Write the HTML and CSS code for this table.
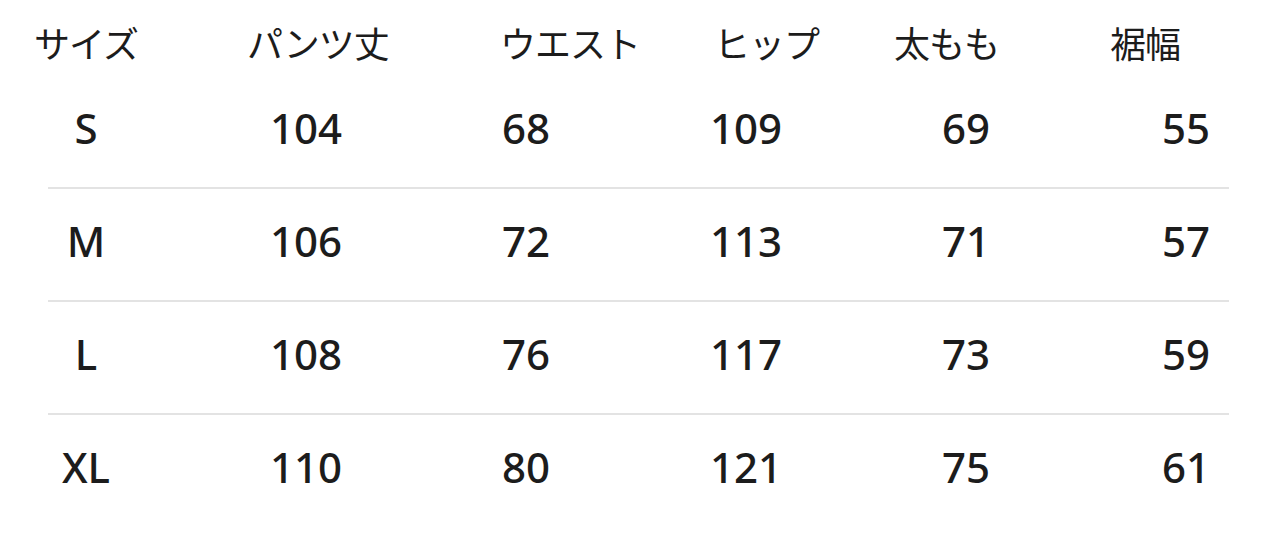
FILE: index.html
```html
<!DOCTYPE html>
<html lang="ja">
<head>
<meta charset="utf-8">
<title>サイズ表</title>
<link rel="stylesheet" href="styles.css">
</head>
<body>
<div class="chart">
  <div class="head">
    <div class="h">サイズ</div>
    <div class="h">パンツ丈</div>
    <div class="h">ウエスト</div>
    <div class="h">ヒップ</div>
    <div class="h">太もも</div>
    <div class="h">裾幅</div>
  </div>
  <div class="row">
    <div class="c">S</div><div class="c">104</div><div class="c">68</div><div class="c">109</div><div class="c">69</div><div class="c">55</div>
  </div>
  <div class="row">
    <div class="c">M</div><div class="c">106</div><div class="c">72</div><div class="c">113</div><div class="c">71</div><div class="c">57</div>
  </div>
  <div class="row">
    <div class="c">L</div><div class="c">108</div><div class="c">76</div><div class="c">117</div><div class="c">73</div><div class="c">59</div>
  </div>
  <div class="row last">
    <div class="c">XL</div><div class="c">110</div><div class="c">80</div><div class="c">121</div><div class="c">75</div><div class="c">61</div>
  </div>
</div>
</body>
</html>
```
FILE: styles.css
```css
html, body {
  margin: 0;
  padding: 0;
  background: #ffffff;
}
body {
  width: 1280px;
  height: 539px;
  overflow: hidden;
  color: #1c1c1c;
  font-family: "Noto Sans", "Noto Sans CJK JP", sans-serif;
}
.chart {
  display: flex;
  flex-direction: column;
}
.head {
  display: grid;
  grid-template-columns: 213px 253px 214px 180px 216px auto;
  align-items: center;
  height: 76px;
  padding-left: 34px;
  padding-top: 8px;
  box-sizing: border-box;
  font-family: "Noto Sans CJK JP", sans-serif;
  font-size: 36px;
  font-weight: 400;
  line-height: 1;
  letter-spacing: -1px;
}
.row {
  display: grid;
  grid-template-columns: repeat(6, 172px);
  column-gap: 48px;
  align-items: center;
  height: 113px;
  padding-bottom: 9px;
  box-sizing: border-box;
  font-size: 42px;
  font-weight: 500;
  line-height: 1;
  background: linear-gradient(#e3e3e3, #e3e3e3) no-repeat 48px 100% / 1181px 2px;
}
.row.last {
  background: none;
}
.c {
  text-align: center;
}
```
